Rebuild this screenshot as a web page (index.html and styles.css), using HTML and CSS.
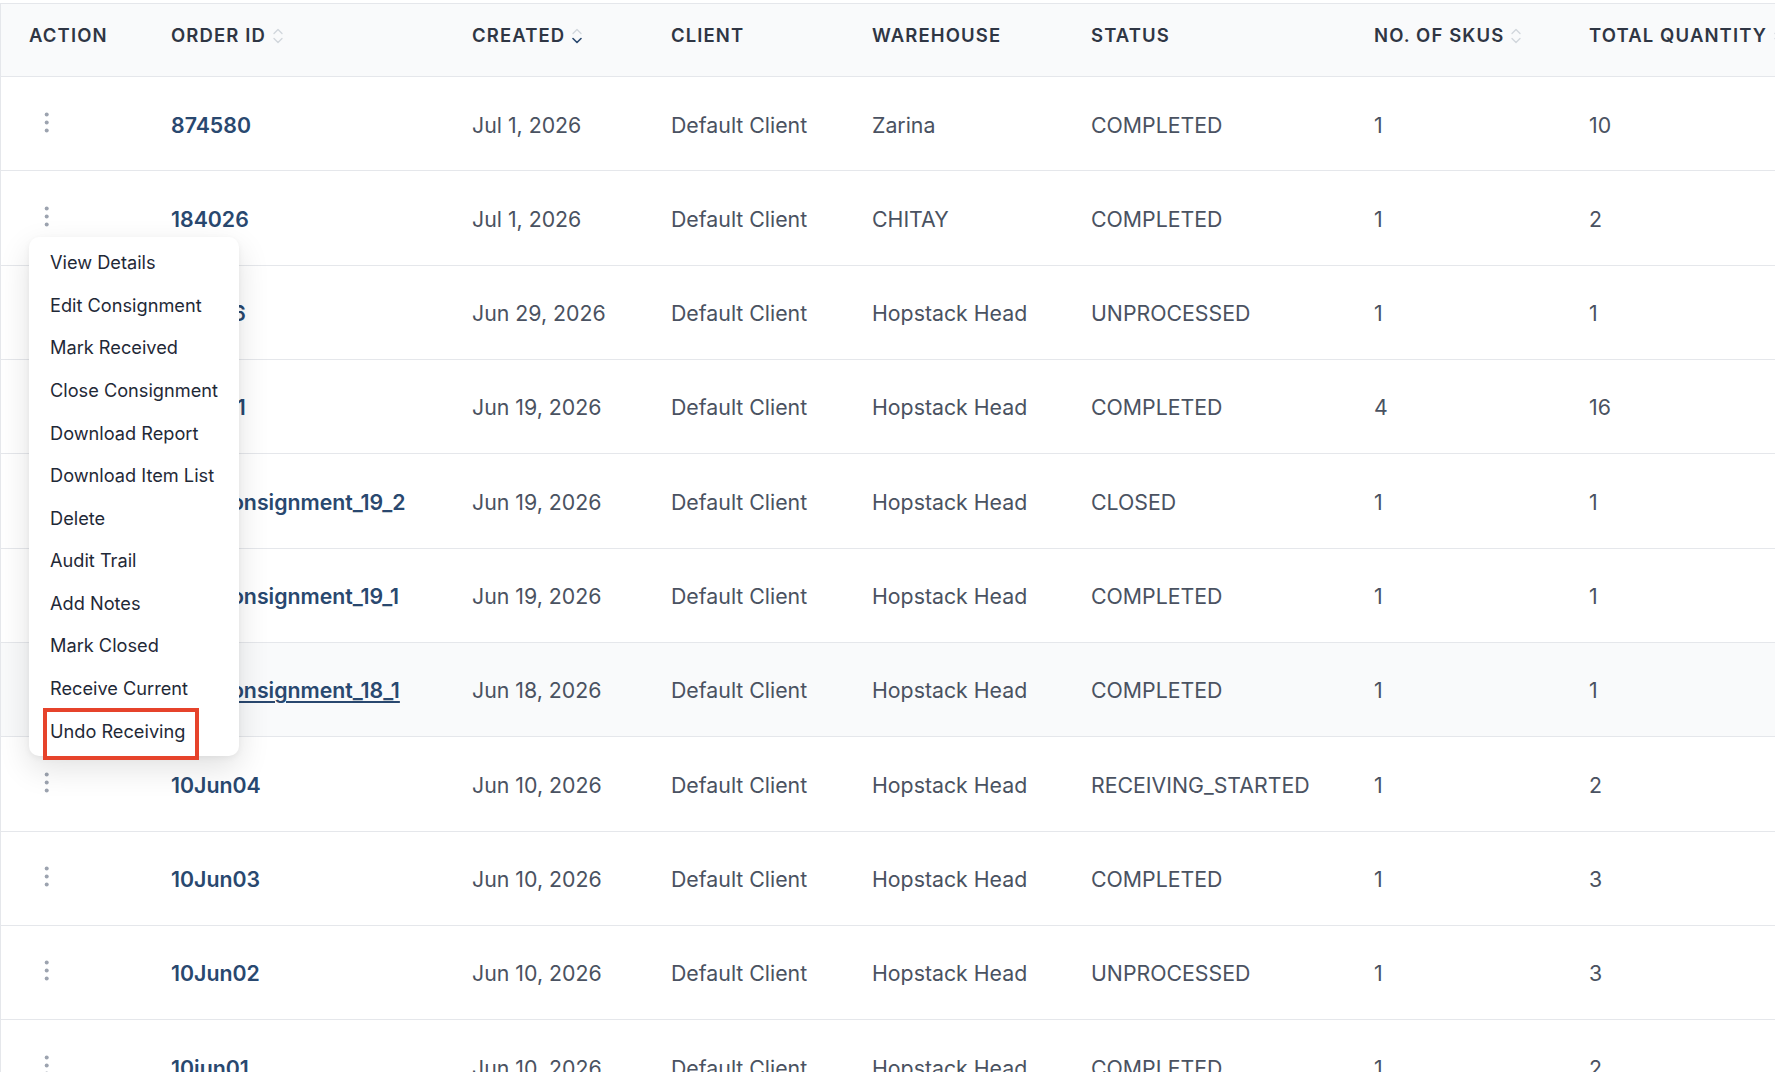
FILE: index.html
```html
<!DOCTYPE html>
<html lang="en">
<head>
    <meta charset="UTF-8">
    <meta name="viewport" content="width=device-width, initial-scale=1.0">
    <title>Consignments</title>
    <link rel="stylesheet" href="styles.css">
</head>
<body>
    <div class="table-wrap">
        <table class="orders">
            <colgroup>
                <col class="col-action">
                <col class="col-order">
                <col class="col-created">
                <col class="col-client">
                <col class="col-warehouse">
                <col class="col-status">
                <col class="col-skus">
                <col class="col-qty">
            </colgroup>
            <thead>
                <tr>
                    <th>Action</th>
                    <th>Order ID <svg class="sort" width="10" height="16" viewBox="0 0 10 16"><path d="M1 5.5L5 1.5l4 4"/><path d="M1 10.5l4 4 4-4"/></svg></th>
                    <th>Created <svg class="sort desc" width="10" height="16" viewBox="0 0 10 16"><path d="M1 5.5L5 1.5l4 4"/><path class="on" d="M1 10.5l4 4 4-4"/></svg></th>
                    <th>Client</th>
                    <th>Warehouse</th>
                    <th>Status</th>
                    <th>No. of SKUs <svg class="sort" width="10" height="16" viewBox="0 0 10 16"><path d="M1 5.5L5 1.5l4 4"/><path d="M1 10.5l4 4 4-4"/></svg></th>
                    <th>Total Quantity <svg class="sort" width="10" height="16" viewBox="0 0 10 16"><path d="M1 5.5L5 1.5l4 4"/><path d="M1 10.5l4 4 4-4"/></svg></th>
                </tr>
            </thead>
            <tbody>
                <tr>
                    <td><div class="row-actions"><button class="kebab"><svg width="20" height="28" viewBox="0 0 20 28"><circle cx="9.7" cy="3.5" r="2"/><circle cx="9.7" cy="11.5" r="2"/><circle cx="9.7" cy="19.5" r="2"/></svg></button></div></td>
                    <td><a class="order-link" href="#">874580</a></td>
                    <td>Jul 1, 2026</td>
                    <td>Default Client</td>
                    <td>Zarina</td>
                    <td>COMPLETED</td>
                    <td>1</td>
                    <td>10</td>
                </tr>
                <tr>
                    <td>
                        <div class="row-actions">
                            <button class="kebab"><svg width="20" height="28" viewBox="0 0 20 28"><circle cx="9.7" cy="3.5" r="2"/><circle cx="9.7" cy="11.5" r="2"/><circle cx="9.7" cy="19.5" r="2"/></svg></button>
                            <ul class="dropdown">
                                <li class="dropdown-item">View Details</li>
                                <li class="dropdown-item">Edit Consignment</li>
                                <li class="dropdown-item">Mark Received</li>
                                <li class="dropdown-item">Close Consignment</li>
                                <li class="dropdown-item">Download Report</li>
                                <li class="dropdown-item">Download Item List</li>
                                <li class="dropdown-item">Delete</li>
                                <li class="dropdown-item">Audit Trail</li>
                                <li class="dropdown-item">Add Notes</li>
                                <li class="dropdown-item">Mark Closed</li>
                                <li class="dropdown-item">Receive Current</li>
                                <li class="dropdown-item highlighted">Undo Receiving</li>
                            </ul>
                        </div>
                    </td>
                    <td><a class="order-link" href="#">184026</a></td>
                    <td>Jul 1, 2026</td>
                    <td>Default Client</td>
                    <td>CHITAY</td>
                    <td>COMPLETED</td>
                    <td>1</td>
                    <td>2</td>
                </tr>
                <tr>
                    <td><div class="row-actions"><button class="kebab"><svg width="20" height="28" viewBox="0 0 20 28"><circle cx="9.7" cy="3.5" r="2"/><circle cx="9.7" cy="11.5" r="2"/><circle cx="9.7" cy="19.5" r="2"/></svg></button></div></td>
                    <td><a class="order-link" href="#">173926</a></td>
                    <td>Jun 29, 2026</td>
                    <td>Default Client</td>
                    <td>Hopstack Head</td>
                    <td>UNPROCESSED</td>
                    <td>1</td>
                    <td>1</td>
                </tr>
                <tr>
                    <td><div class="row-actions"><button class="kebab"><svg width="20" height="28" viewBox="0 0 20 28"><circle cx="9.7" cy="3.5" r="2"/><circle cx="9.7" cy="11.5" r="2"/><circle cx="9.7" cy="19.5" r="2"/></svg></button></div></td>
                    <td><a class="order-link" href="#">627341</a></td>
                    <td>Jun 19, 2026</td>
                    <td>Default Client</td>
                    <td>Hopstack Head</td>
                    <td>COMPLETED</td>
                    <td>4</td>
                    <td>16</td>
                </tr>
                <tr>
                    <td><div class="row-actions"><button class="kebab"><svg width="20" height="28" viewBox="0 0 20 28"><circle cx="9.7" cy="3.5" r="2"/><circle cx="9.7" cy="11.5" r="2"/><circle cx="9.7" cy="19.5" r="2"/></svg></button></div></td>
                    <td><a class="order-link" href="#">TestConsignment_19_2</a></td>
                    <td>Jun 19, 2026</td>
                    <td>Default Client</td>
                    <td>Hopstack Head</td>
                    <td>CLOSED</td>
                    <td>1</td>
                    <td>1</td>
                </tr>
                <tr>
                    <td><div class="row-actions"><button class="kebab"><svg width="20" height="28" viewBox="0 0 20 28"><circle cx="9.7" cy="3.5" r="2"/><circle cx="9.7" cy="11.5" r="2"/><circle cx="9.7" cy="19.5" r="2"/></svg></button></div></td>
                    <td><a class="order-link" href="#">TestConsignment_19_1</a></td>
                    <td>Jun 19, 2026</td>
                    <td>Default Client</td>
                    <td>Hopstack Head</td>
                    <td>COMPLETED</td>
                    <td>1</td>
                    <td>1</td>
                </tr>
                <tr class="is-hover">
                    <td><div class="row-actions"><button class="kebab"><svg width="20" height="28" viewBox="0 0 20 28"><circle cx="9.7" cy="3.5" r="2"/><circle cx="9.7" cy="11.5" r="2"/><circle cx="9.7" cy="19.5" r="2"/></svg></button></div></td>
                    <td><a class="order-link" href="#">TestConsignment_18_1</a></td>
                    <td>Jun 18, 2026</td>
                    <td>Default Client</td>
                    <td>Hopstack Head</td>
                    <td>COMPLETED</td>
                    <td>1</td>
                    <td>1</td>
                </tr>
                <tr>
                    <td><div class="row-actions"><button class="kebab"><svg width="20" height="28" viewBox="0 0 20 28"><circle cx="9.7" cy="3.5" r="2"/><circle cx="9.7" cy="11.5" r="2"/><circle cx="9.7" cy="19.5" r="2"/></svg></button></div></td>
                    <td><a class="order-link" href="#">10Jun04</a></td>
                    <td>Jun 10, 2026</td>
                    <td>Default Client</td>
                    <td>Hopstack Head</td>
                    <td>RECEIVING_STARTED</td>
                    <td>1</td>
                    <td>2</td>
                </tr>
                <tr>
                    <td><div class="row-actions"><button class="kebab"><svg width="20" height="28" viewBox="0 0 20 28"><circle cx="9.7" cy="3.5" r="2"/><circle cx="9.7" cy="11.5" r="2"/><circle cx="9.7" cy="19.5" r="2"/></svg></button></div></td>
                    <td><a class="order-link" href="#">10Jun03</a></td>
                    <td>Jun 10, 2026</td>
                    <td>Default Client</td>
                    <td>Hopstack Head</td>
                    <td>COMPLETED</td>
                    <td>1</td>
                    <td>3</td>
                </tr>
                <tr>
                    <td><div class="row-actions"><button class="kebab"><svg width="20" height="28" viewBox="0 0 20 28"><circle cx="9.7" cy="3.5" r="2"/><circle cx="9.7" cy="11.5" r="2"/><circle cx="9.7" cy="19.5" r="2"/></svg></button></div></td>
                    <td><a class="order-link" href="#">10Jun02</a></td>
                    <td>Jun 10, 2026</td>
                    <td>Default Client</td>
                    <td>Hopstack Head</td>
                    <td>UNPROCESSED</td>
                    <td>1</td>
                    <td>3</td>
                </tr>
                <tr>
                    <td><div class="row-actions"><button class="kebab"><svg width="20" height="28" viewBox="0 0 20 28"><circle cx="9.7" cy="3.5" r="2"/><circle cx="9.7" cy="11.5" r="2"/><circle cx="9.7" cy="19.5" r="2"/></svg></button></div></td>
                    <td><a class="order-link" href="#">10jun01</a></td>
                    <td>Jun 10, 2026</td>
                    <td>Default Client</td>
                    <td>Hopstack Head</td>
                    <td>COMPLETED</td>
                    <td>1</td>
                    <td>2</td>
                </tr>
            </tbody>
        </table>
    </div>
</body>
</html>
```

FILE: styles.css
```css
*,
*::before,
*::after {
    margin: 0;
    padding: 0;
    box-sizing: border-box;
}

:root {
    --border: #e5e7eb;
    --head-bg: #f9fafb;
    --head-text: #2f3644;
    --text: #4a5261;
    --menu-text: #1f2937;
    --link: #29486f;
    --muted: #9ca3af;
    --sort: #d1d5db;
    --flag: #e6432b;
}

body {
    font-family: 'Inter', 'Noto Sans', sans-serif;
    background: #ffffff;
    color: var(--text);
    overflow: hidden;
}

.table-wrap {
    padding-top: 3px;
    width: max-content;
}

.orders {
    table-layout: fixed;
    width: 1815px;
    border-collapse: separate;
    border-spacing: 0;
    border-left: 1px solid var(--border);
}

.col-action { width: 146px; }
.col-order { width: 301px; }
.col-created { width: 199px; }
.col-client { width: 201px; }
.col-warehouse { width: 219px; }
.col-status { width: 283px; }
.col-skus { width: 215px; }
.col-qty { width: 251px; }

th {
    text-align: left;
    background: var(--head-bg);
    color: var(--head-text);
    font-size: 18.5px;
    font-weight: 600;
    letter-spacing: 0.06em;
    text-transform: uppercase;
    line-height: 24px;
    padding: 19px 24px 29px;
    border-top: 1px solid var(--border);
    border-bottom: 1px solid var(--border);
    white-space: nowrap;
}

th:first-child,
td:first-child {
    padding-left: 28px;
}

.sort {
    display: inline-block;
    vertical-align: -2px;
    margin-left: 1px;
    fill: none;
    stroke: var(--sort);
    stroke-width: 1.3;
    stroke-linecap: round;
    stroke-linejoin: round;
}

.sort .on {
    stroke: var(--link);
    stroke-width: 1.6;
}

td {
    font-size: 21.3px;
    line-height: 28px;
    padding: 33.5px 24px 31.83px;
    border-bottom: 1px solid var(--border);
    white-space: nowrap;
}

.is-hover td {
    background: var(--head-bg);
}

.order-link {
    color: var(--link);
    font-weight: 600;
    text-decoration: none;
}

.is-hover .order-link {
    text-decoration: underline;
    text-underline-offset: 3px;
}

.row-actions {
    position: relative;
    height: 28px;
}

.kebab {
    display: block;
    margin-left: 8px;
    border: none;
    background: none;
    cursor: pointer;
}

.kebab svg {
    display: block;
    fill: var(--muted);
}

.dropdown {
    position: absolute;
    top: calc(100% + 4px);
    left: 0;
    z-index: 10;
    width: 210px;
    padding: 4px 0;
    list-style: none;
    background: #ffffff;
    border-radius: 10px;
    box-shadow: 0 12px 32px rgba(0, 0, 0, 0.12), 0 2px 6px rgba(0, 0, 0, 0.05);
}

.dropdown-item {
    position: relative;
    font-size: 18.2px;
    line-height: 24px;
    padding: 9.3px 20px 9.3px 21px;
    color: var(--menu-text);
    cursor: pointer;
}

.dropdown-item.highlighted::after {
    content: '';
    position: absolute;
    left: 14px;
    top: -1px;
    width: 156px;
    height: 52px;
    border: 4px solid var(--flag);
}
```
